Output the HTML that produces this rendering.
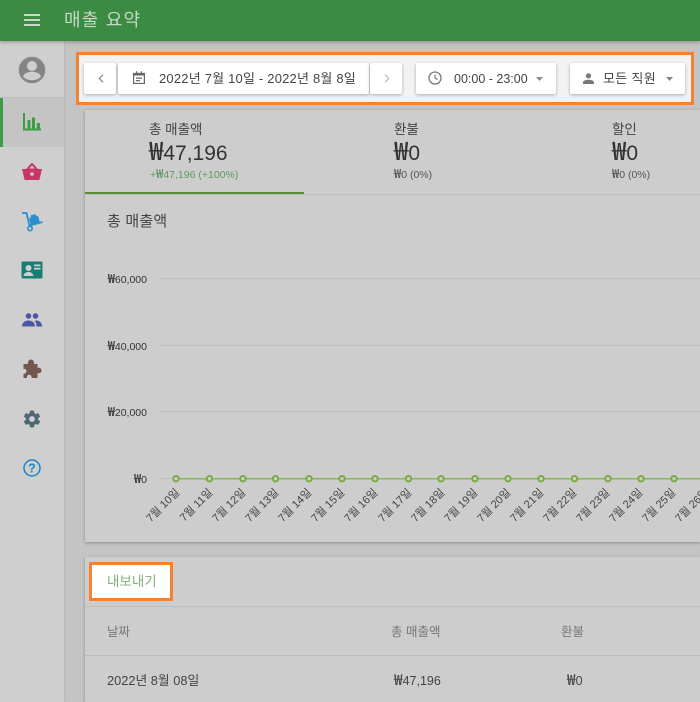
<!DOCTYPE html>
<html lang="ko"><head><meta charset="utf-8">
<style>
html,body{margin:0;padding:0;width:700px;height:702px;overflow:hidden;background:#c4c4c4}
body{position:relative;font-family:"Liberation Sans","Noto Sans CJK KR",sans-serif;color:#3a3a3a}
.a{position:absolute;white-space:nowrap}
.w{font-family:"Noto Sans CJK KR",sans-serif;font-weight:500;font-size:1.200em;line-height:0}
svg.i{position:absolute;display:block}
.btn{position:absolute;top:63px;height:31px;background:#fff;box-shadow:0 1px 3px rgba(0,0,0,.3);border-radius:2px}
.lbl{position:absolute;width:60px;text-align:right;font-size:11px;color:#444;transform-origin:100% 50%;transform:rotate(-45deg);white-space:nowrap;line-height:12px}
.y{position:absolute;left:85px;width:62px;text-align:right;font-size:10.500px;color:#333;line-height:14px}
.g{position:absolute;left:160px;right:0;height:1px;background:#bdbdbd}
</style></head><body>
<!-- top bar -->
<div class="a" style="left:0;top:0;width:700px;height:41px;background:#3b8c42;box-shadow:0 1px 4px rgba(0,0,0,.3);z-index:5"></div>
<svg class="i" style="left:24px;top:14px;z-index:6" width="16" height="12" viewBox="0 0 16 12"><path d="M0 1h16M0 6h16M0 11h16" stroke="#c5d8c6" stroke-width="2"/></svg>
<div class="a" style="left:64px;top:8px;font-size:18px;line-height:25px;color:#c5d8c6;letter-spacing:1.200px;z-index:6">매출 요약</div>

<!-- sidebar -->
<div class="a" style="left:0;top:41px;width:64px;height:661px;background:#cfcfcf;box-shadow:1px 0 1px rgba(0,0,0,.06)"></div>
<div class="a" style="left:0;top:97px;width:64px;height:1px;background:#bdbdbd"></div>
<div class="a" style="left:0;top:98px;width:64px;height:49px;background:#c4c4c4"></div>
<div class="a" style="left:0;top:98px;width:3px;height:49px;background:#3f9c46"></div>
<svg class="i" style="left:18px;top:56px" width="28" height="28" viewBox="0 0 28 28"><circle cx="14" cy="14" r="13.300" fill="#858585"/><circle cx="14" cy="10" r="5" fill="#cfcfcf"/><path d="M5 20.500c1.500-3.600 5.500-4.800 9-4.800s7.500 1.200 9 4.800c-2 2.400-5.300 3.700-9 3.700s-7-1.300-9-3.700z" fill="#cfcfcf"/></svg>
<svg class="i" style="left:23px;top:113px" width="18" height="18" viewBox="0 0 18 18"><path d="M1 0v16.500h17" fill="none" stroke="#3f9c46" stroke-width="2"/><path d="M4.500 7H7.500v9.500H4.500zM9 4.500h3v12H9zM13.800 10H17v6.500h-3.200z" fill="#3f9c46"/></svg>
<svg class="i" style="left:22px;top:163px" width="20" height="17" viewBox="0 0 20 17"><path d="M0 6h20l-2.400 10.200a1 1 0 0 1-1 .800H3.400a1 1 0 0 1-1-.800z" fill="#c73768"/><path d="M5 6.500L10 1l5 5.500z" fill="none" stroke="#c73768" stroke-width="2"/><circle cx="10" cy="11" r="1.800" fill="#cfcfcf"/></svg>
<svg class="i" style="left:21px;top:211px" width="22" height="21" viewBox="0 0 22 21"><path d="M1 2h4.500l3 12.500 13-3.500" fill="none" stroke="#2a8fce" stroke-width="1.800"/><circle cx="9" cy="17.500" r="2.200" fill="none" stroke="#2a8fce" stroke-width="1.600"/><path d="M8 7l9-2.300 2 7-9 2.500z" fill="#2a8fce"/><path d="M9.500 4.500l5-1.500 1.200 3.500-5.200 1.500z" fill="#2a8fce"/></svg>
<svg class="i" style="left:21px;top:261px" width="22" height="18" viewBox="0 0 22 18"><rect width="21" height="17" x=".5" y=".5" rx="1.500" fill="#177f72"/><circle cx="7.500" cy="7" r="3" fill="#cfcfcf"/><path d="M2.500 15c.5-3 2.700-4 5-4s4.500 1 5 4z" fill="#cfcfcf"/><path d="M13 3.500h6.500v1.700H13zM13 6.800h6.500v1.700H13z" fill="#cfcfcf"/></svg>
<svg class="i" style="left:22px;top:313px" width="20" height="14" viewBox="0 0 20 14"><circle cx="6.500" cy="3" r="2.800" fill="#4a57a5"/><circle cx="13.500" cy="3" r="2.800" fill="#4a57a5"/><path d="M0 13.500c0-4 3-6 6.500-6s6.500 2 6.500 6z" fill="#4a57a5"/><path d="M14 7.500c3.500 0 6 2 6 6h-5.500c0-2.500-.5-4.500-2-5.500z" fill="#4a57a5"/></svg>
<svg class="i" style="left:22px;top:359px" width="20" height="20" viewBox="0 0 20 20"><path d="M1.500 5H6C5.600 2.800 6.800 .5 9 .5s3.400 2.300 3 4.500h3.500v4C17.500 8.300 19.500 9.300 19.500 11.500S17.500 14.700 15.500 14v5H9.500c.4-2-.7-3.300-2.300-3.300S4.600 17 5 19H1.500v-4.500C3 15 4.500 14 4.500 12.200S3 9.500 1.500 10z" fill="#73564c"/></svg>
<svg class="i" style="left:22px;top:408.500px" width="20" height="20" viewBox="0 0 24 24"><path fill="#4e6772" d="M19.430 12.980c.04-.32.070-.64.070-.98s-.03-.66-.07-.98l2.110-1.650a.5.500 0 0 0 .12-.64l-2-3.460a.5.500 0 0 0-.61-.22l-2.490 1a7.300 7.300 0 0 0-1.690-.98l-.38-2.650A.49.490 0 0 0 14 2h-4a.49.490 0 0 0-.49.420l-.38 2.650c-.61.25-1.170.59-1.690.98l-2.490-1a.49.490 0 0 0-.61.220l-2 3.460a.49.490 0 0 0 .12.640l2.110 1.650c-.04.320-.07.650-.07.980s.03.660.07.980l-2.110 1.650a.5.500 0 0 0-.12.640l2 3.460c.12.220.39.300.61.220l2.490-1c.52.400 1.080.73 1.690.98l.38 2.650c.03.240.24.420.49.420h4c.25 0 .46-.18.490-.42l.38-2.650c.61-.25 1.170-.59 1.690-.98l2.490 1c.23.090.49 0 .61-.22l2-3.460a.5.500 0 0 0-.12-.64zM12 15.500a3.500 3.500 0 1 1 0-7 3.500 3.500 0 0 1 0 7z"/></svg>
<svg class="i" style="left:23px;top:459px" width="18" height="18" viewBox="0 0 18 18"><circle cx="9" cy="9" r="8" fill="none" stroke="#1b87c4" stroke-width="1.500"/><text x="9" y="13.500" font-size="12.500" text-anchor="middle" font-family="Liberation Sans" font-weight="700" fill="#1b87c4">?</text></svg>

<!-- highlight toolbar -->
<div class="a" style="left:76px;top:52px;width:612px;height:47px;background:#f2f2f2;border:3px solid #f58232"></div>
<div class="btn" style="left:84px;width:32px"></div>
<svg class="i" style="left:98px;top:74px" width="6" height="9" viewBox="0 0 6 9"><path d="M5 .7L1.200 4.500 5 8.300" fill="none" stroke="#888" stroke-width="1.200"/></svg>
<div class="btn" style="left:118px;width:251px"></div>
<svg class="i" style="left:133px;top:71px" width="12" height="13" viewBox="0 0 12 13"><path d="M.6 2.500h10.800v10H.6z" fill="none" stroke="#666" stroke-width="1.200"/><path d="M1 2h10v2.500H1zM3 .2h1.200V3H3zM7.800.2H9V3H7.800zM3 6.500h6v1.200H3zM3 9h4v1.200H3z" fill="#666"/></svg>
<div class="a" style="left:159px;top:70px;font-size:13px;line-height:18px;color:#444;letter-spacing:.2px">2022년 7월 10일 - 2022년 8월 8일</div>
<div class="btn" style="left:370px;width:32px"></div>
<svg class="i" style="left:384px;top:74px" width="6" height="9" viewBox="0 0 6 9"><path d="M1 .7L4.800 4.500 1 8.300" fill="none" stroke="#bbb" stroke-width="1.200"/></svg>
<div class="btn" style="left:416px;width:140px"></div>
<svg class="i" style="left:428px;top:71px" width="14" height="14" viewBox="0 0 14 14"><circle cx="7" cy="7" r="6" fill="none" stroke="#777" stroke-width="1.300"/><path d="M7 3.500V7l2.600 1.600" fill="none" stroke="#777" stroke-width="1.200"/></svg>
<div class="a" style="left:454px;top:70px;font-size:12.500px;line-height:18px;color:#444">00:00 - 23:00</div>
<svg class="i" style="left:536px;top:77px" width="7" height="4" viewBox="0 0 7 4"><path d="M0 0h7L3.500 4z" fill="#888"/></svg>
<div class="btn" style="left:570px;width:115px"></div>
<svg class="i" style="left:583px;top:73px" width="11" height="11" viewBox="0 0 11 11"><circle cx="5.500" cy="2.800" r="2.600" fill="#777"/><path d="M0 11V9.500C0 7.500 3 6.700 5.500 6.700S11 7.500 11 9.500V11z" fill="#777"/></svg>
<div class="a" style="left:603px;top:70px;font-size:13px;line-height:18px;color:#444;letter-spacing:.3px">모든 직원</div>
<svg class="i" style="left:666px;top:77px" width="7" height="4" viewBox="0 0 7 4"><path d="M0 0h7L3.500 4z" fill="#888"/></svg>

<!-- chart card -->
<div class="a" style="left:85px;top:110px;width:615px;height:432px;background:#cdcdcd;box-shadow:0 1px 3px rgba(0,0,0,.3)"></div>
<div class="a" style="left:85px;top:194px;width:615px;height:1px;background:#bdbdbd"></div>
<div class="a" style="left:85px;top:192px;width:219px;height:2px;background:#5a8f3a"></div>
<div class="a" style="left:149px;top:121px;font-size:13.500px;line-height:18px;color:#444">총 매출액</div>
<div class="a" style="left:149px;top:140px;font-size:21px;line-height:28px;color:#333"><span class="w">₩</span>47,196</div>
<div class="a" style="left:150px;top:168px;font-size:10.500px;line-height:14px;color:#5c9a62">+<span class="w">₩</span>47,196 (+100%)</div>
<div class="a" style="left:394px;top:121px;font-size:13.500px;line-height:18px;color:#444">환불</div>
<div class="a" style="left:394px;top:140px;font-size:21px;line-height:28px;color:#333"><span class="w">₩</span>0</div>
<div class="a" style="left:394px;top:168px;font-size:10.500px;line-height:14px;color:#555"><span class="w">₩</span>0 (0%)</div>
<div class="a" style="left:612px;top:121px;font-size:13.500px;line-height:18px;color:#444">할인</div>
<div class="a" style="left:612px;top:140px;font-size:21px;line-height:28px;color:#333"><span class="w">₩</span>0</div>
<div class="a" style="left:612px;top:168px;font-size:10.500px;line-height:14px;color:#555"><span class="w">₩</span>0 (0%)</div>
<div class="a" style="left:107px;top:212px;font-size:15px;line-height:20px;color:#444;letter-spacing:.2px">총 매출액</div>

<div class="y" style="top:273px"><span class="w">₩</span>60,000</div><div class="g" style="top:278px"></div>
<div class="y" style="top:340px"><span class="w">₩</span>40,000</div><div class="g" style="top:345px"></div>
<div class="y" style="top:406px"><span class="w">₩</span>20,000</div><div class="g" style="top:411px"></div>
<div class="y" style="top:473px"><span class="w">₩</span>0</div><div class="g" style="top:478px"></div>
<svg class="i" style="left:160px;top:470px" width="540" height="18" viewBox="0 0 540 18"><path d="M16 8.700H540" stroke="#8ab55c" stroke-width="1.500"/><g fill="#cdcdcd" stroke="#7aab3f" stroke-width="2"><circle cx="16" cy="8.700" r="2.700"/><circle cx="49.500" cy="8.700" r="2.700"/><circle cx="83" cy="8.700" r="2.700"/><circle cx="115.500" cy="8.700" r="2.700"/><circle cx="149" cy="8.700" r="2.700"/><circle cx="182" cy="8.700" r="2.700"/><circle cx="215" cy="8.700" r="2.700"/><circle cx="248.500" cy="8.700" r="2.700"/><circle cx="281" cy="8.700" r="2.700"/><circle cx="315" cy="8.700" r="2.700"/><circle cx="348" cy="8.700" r="2.700"/><circle cx="381" cy="8.700" r="2.700"/><circle cx="414.500" cy="8.700" r="2.700"/><circle cx="448" cy="8.700" r="2.700"/><circle cx="481" cy="8.700" r="2.700"/><circle cx="514" cy="8.700" r="2.700"/></g></svg>
<div class="lbl" style="left:118px;top:485px">7월 10일</div>
<div class="lbl" style="left:151px;top:485px">7월 11일</div>
<div class="lbl" style="left:184px;top:485px">7월 12일</div>
<div class="lbl" style="left:217px;top:485px">7월 13일</div>
<div class="lbl" style="left:250px;top:485px">7월 14일</div>
<div class="lbl" style="left:283px;top:485px">7월 15일</div>
<div class="lbl" style="left:316px;top:485px">7월 16일</div>
<div class="lbl" style="left:350px;top:485px">7월 17일</div>
<div class="lbl" style="left:383px;top:485px">7월 18일</div>
<div class="lbl" style="left:416px;top:485px">7월 19일</div>
<div class="lbl" style="left:449px;top:485px">7월 20일</div>
<div class="lbl" style="left:482px;top:485px">7월 21일</div>
<div class="lbl" style="left:515px;top:485px">7월 22일</div>
<div class="lbl" style="left:548px;top:485px">7월 23일</div>
<div class="lbl" style="left:581px;top:485px">7월 24일</div>
<div class="lbl" style="left:614px;top:485px">7월 25일</div>
<div class="lbl" style="left:647px;top:485px">7월 26일</div>

<!-- export card -->
<div class="a" style="left:85px;top:557px;width:615px;height:145px;background:#cdcdcd;box-shadow:0 1px 3px rgba(0,0,0,.3)"></div>
<div class="a" style="left:85px;top:606px;width:615px;height:1px;background:#bdbdbd"></div>
<div class="a" style="left:85px;top:655px;width:615px;height:1px;background:#bdbdbd"></div>
<div class="a" style="left:89px;top:562px;width:78px;height:33px;background:#fff;border:3px solid #f58232"></div>
<div class="a" style="left:107px;top:573px;font-size:13.500px;line-height:18px;color:#7fb07f">내보내기</div>
<div class="a" style="left:107px;top:623px;font-size:12.500px;line-height:18px;color:#777">날짜</div>
<div class="a" style="left:391px;top:623px;font-size:12.500px;line-height:18px;color:#777">총 매출액</div>
<div class="a" style="left:561px;top:623px;font-size:12.500px;line-height:18px;color:#777">환불</div>
<div class="a" style="left:107px;top:672px;font-size:12.800px;line-height:18px;color:#444">2022년 8월 08일</div>
<div class="a" style="left:394px;top:672px;font-size:12.500px;line-height:18px;color:#444"><span class="w">₩</span>47,196</div>
<div class="a" style="left:567px;top:672px;font-size:12.500px;line-height:18px;color:#444"><span class="w">₩</span>0</div>
</body></html>
